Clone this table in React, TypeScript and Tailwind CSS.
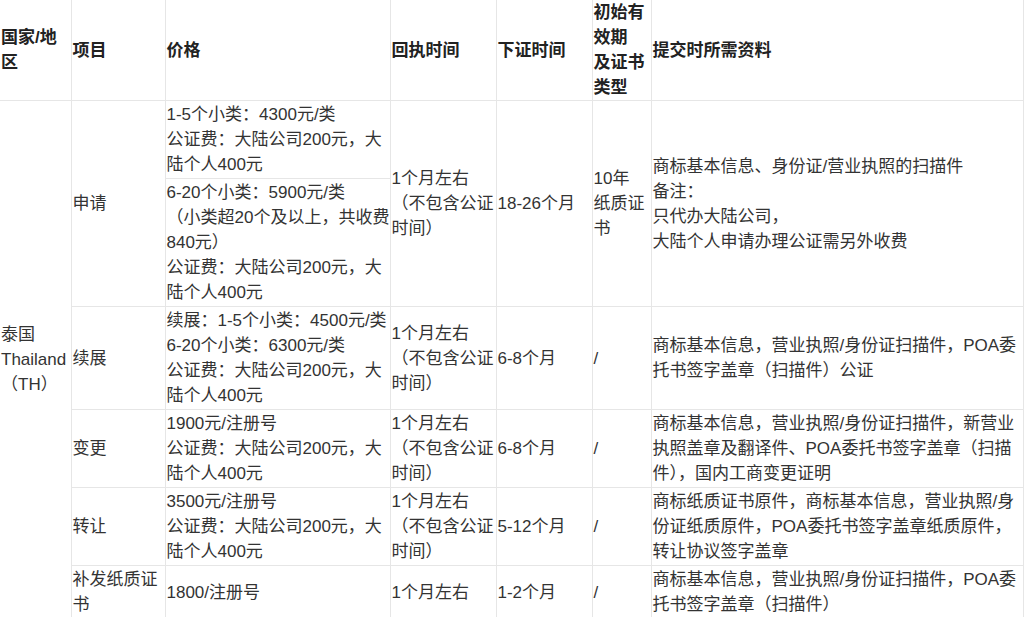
import React from "react";

const cell =
  "border-r border-b border-[#e6e6e6] px-px py-px align-middle text-left font-normal text-[#333]";
const head =
  "border-r border-b border-[#e6e6e6] px-px py-0 align-middle text-left font-bold text-[#222]";

function Lines({ lines }: { lines: string[] }) {
  return (
    <>
      {lines.map((l, i) => (
        <div key={i} className="whitespace-nowrap">
          {l}
        </div>
      ))}
    </>
  );
}

const fee = ["公证费：大陆公司200元，大", "陆个人400元"];
const receipt = ["1个月左右", "（不包含公证", "时间）"];

export default function App() {
  return (
    <div
      className="w-[1024px] h-[617px] bg-white overflow-hidden text-[17px] leading-[25px]"
      style={{ fontFamily: '"Liberation Sans", "Noto Sans CJK SC", sans-serif' }}
    >
      <table className="table-fixed border-collapse w-[1023px]">
        <colgroup>
          <col className="w-[71px]" />
          <col className="w-[94px]" />
          <col className="w-[225px]" />
          <col className="w-[106px]" />
          <col className="w-[96px]" />
          <col className="w-[59px]" />
          <col className="w-[372px]" />
        </colgroup>
        <thead>
          <tr>
            <th className={head}>
              <Lines lines={["国家/地", "区"]} />
            </th>
            <th className={head}>项目</th>
            <th className={head}>价格</th>
            <th className={head}>回执时间</th>
            <th className={head}>下证时间</th>
            <th className={head}>
              <Lines lines={["初始有", "效期", "及证书", "类型"]} />
            </th>
            <th className={head}>提交时所需资料</th>
          </tr>
        </thead>
        <tbody>
          <tr>
            <td className={cell} rowSpan={6}>
              <Lines lines={["泰国", "Thailand", "（TH）"]} />
            </td>
            <td className={cell} rowSpan={2}>
              申请
            </td>
            <td className={cell}>
              <Lines lines={["1-5个小类：4300元/类", ...fee]} />
            </td>
            <td className={cell} rowSpan={2}>
              <Lines lines={receipt} />
            </td>
            <td className={cell} rowSpan={2}>
              18-26个月
            </td>
            <td className={cell} rowSpan={2}>
              <Lines lines={["10年", "纸质证", "书"]} />
            </td>
            <td className={cell} rowSpan={2}>
              <Lines
                lines={[
                  "商标基本信息、身份证/营业执照的扫描件",
                  "备注：",
                  "只代办大陆公司，",
                  "大陆个人申请办理公证需另外收费",
                ]}
              />
            </td>
          </tr>
          <tr>
            <td className={cell}>
              <Lines
                lines={[
                  "6-20个小类：5900元/类",
                  "（小类超20个及以上，共收费",
                  "840元）",
                  ...fee,
                ]}
              />
            </td>
          </tr>
          <tr>
            <td className={cell}>续展</td>
            <td className={cell}>
              <Lines
                lines={["续展：1-5个小类：4500元/类", "6-20个小类：6300元/类", ...fee]}
              />
            </td>
            <td className={cell}>
              <Lines lines={receipt} />
            </td>
            <td className={cell}>6-8个月</td>
            <td className={cell}>/</td>
            <td className={cell}>
              <Lines
                lines={["商标基本信息，营业执照/身份证扫描件，POA委", "托书签字盖章（扫描件）公证"]}
              />
            </td>
          </tr>
          <tr>
            <td className={cell}>变更</td>
            <td className={cell}>
              <Lines lines={["1900元/注册号", ...fee]} />
            </td>
            <td className={cell}>
              <Lines lines={receipt} />
            </td>
            <td className={cell}>6-8个月</td>
            <td className={cell}>/</td>
            <td className={cell}>
              <Lines
                lines={[
                  "商标基本信息，营业执照/身份证扫描件，新营业",
                  "执照盖章及翻译件、POA委托书签字盖章（扫描",
                  "件），国内工商变更证明",
                ]}
              />
            </td>
          </tr>
          <tr>
            <td className={cell}>转让</td>
            <td className={cell}>
              <Lines lines={["3500元/注册号", ...fee]} />
            </td>
            <td className={cell}>
              <Lines lines={receipt} />
            </td>
            <td className={cell}>5-12个月</td>
            <td className={cell}>/</td>
            <td className={cell}>
              <Lines
                lines={[
                  "商标纸质证书原件，商标基本信息，营业执照/身",
                  "份证纸质原件，POA委托书签字盖章纸质原件，",
                  "转让协议签字盖章",
                ]}
              />
            </td>
          </tr>
          <tr>
            <td className={cell}>
              <Lines lines={["补发纸质证", "书"]} />
            </td>
            <td className={cell}>1800/注册号</td>
            <td className={cell}>1个月左右</td>
            <td className={cell}>1-2个月</td>
            <td className={cell}>/</td>
            <td className={cell}>
              <Lines
                lines={["商标基本信息，营业执照/身份证扫描件，POA委", "托书签字盖章（扫描件）"]}
              />
            </td>
          </tr>
        </tbody>
      </table>
    </div>
  );
}
